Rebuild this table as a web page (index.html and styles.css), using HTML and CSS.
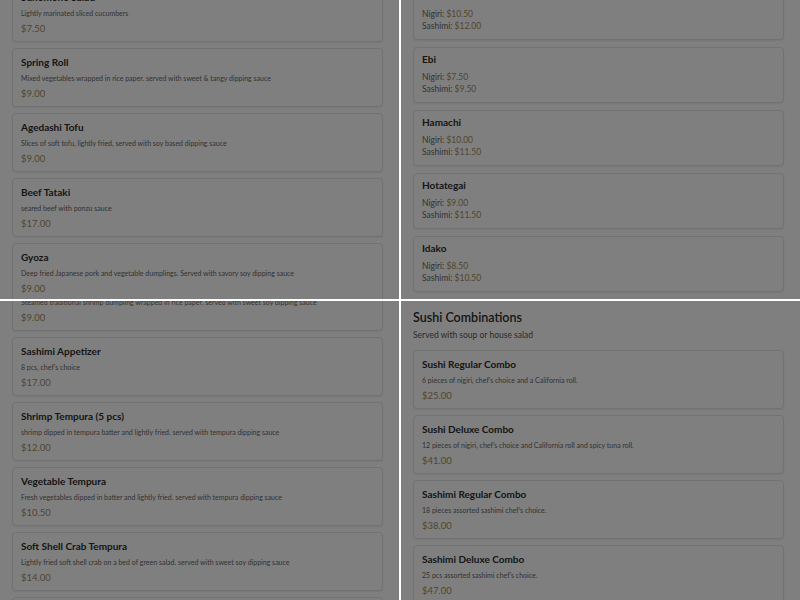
FILE: index.html
```html
<!DOCTYPE html>
<html>
<head>
<meta charset="utf-8">
<link rel="stylesheet" href="styles.css">
</head>
<body>
<div class="screens">
  <section class="screen">
    <div class="page page-a1">
      <div class="card"><h3 class="title">Sunomono Salad</h3><p class="desc">Lightly marinated sliced cucumbers</p><p class="price">$7.50</p></div>
      <div class="card"><h3 class="title">Spring Roll</h3><p class="desc">Mixed vegetables wrapped in rice paper. served with sweet &amp; tangy dipping sauce</p><p class="price">$9.00</p></div>
      <div class="card"><h3 class="title">Agedashi Tofu</h3><p class="desc">Slices of soft tofu, lightly fried, served with soy based dipping sauce</p><p class="price">$9.00</p></div>
      <div class="card"><h3 class="title">Beef Tataki</h3><p class="desc">seared beef with ponzu sauce</p><p class="price">$17.00</p></div>
      <div class="card"><h3 class="title">Gyoza</h3><p class="desc">Deep fried Japanese pork and vegetable dumplings. Served with savory soy dipping sauce</p><p class="price">$9.00</p></div>
    </div>
  </section>
  <section class="screen">
    <div class="page page-b1">
      <div class="card card-sushi"><h3 class="title">Sake</h3><p class="line">Nigiri: <span class="amt">$10.50</span></p><p class="line">Sashimi: <span class="amt">$12.00</span></p></div>
      <div class="card card-sushi"><h3 class="title">Ebi</h3><p class="line">Nigiri: <span class="amt">$7.50</span></p><p class="line">Sashimi: <span class="amt">$9.50</span></p></div>
      <div class="card card-sushi"><h3 class="title">Hamachi</h3><p class="line">Nigiri: <span class="amt">$10.00</span></p><p class="line">Sashimi: <span class="amt">$11.50</span></p></div>
      <div class="card card-sushi"><h3 class="title">Hotategai</h3><p class="line">Nigiri: <span class="amt">$9.00</span></p><p class="line">Sashimi: <span class="amt">$11.50</span></p></div>
      <div class="card card-sushi"><h3 class="title">Idako</h3><p class="line">Nigiri: <span class="amt">$8.50</span></p><p class="line">Sashimi: <span class="amt">$10.50</span></p></div>
    </div>
  </section>
  <section class="screen">
    <div class="page page-a2">
      <div class="card"><h3 class="title">Shumai</h3><p class="desc">Steamed traditional shrimp dumpling wrapped in rice paper. served with sweet soy dipping sauce</p><p class="price">$9.00</p></div>
      <div class="card"><h3 class="title">Sashimi Appetizer</h3><p class="desc">8 pcs, chef's choice</p><p class="price">$17.00</p></div>
      <div class="card"><h3 class="title">Shrimp Tempura (5 pcs)</h3><p class="desc">shrimp dipped in tempura batter and lightly fried. served with tempura dipping sauce</p><p class="price">$12.00</p></div>
      <div class="card"><h3 class="title">Vegetable Tempura</h3><p class="desc">Fresh vegetables dipped in batter and lightly fried. served with tempura dipping sauce</p><p class="price">$10.50</p></div>
      <div class="card"><h3 class="title">Soft Shell Crab Tempura</h3><p class="desc">Lightly fried soft shell crab on a bed of green salad. served with sweet soy dipping sauce</p><p class="price">$14.00</p></div>
      <div class="card"><h3 class="title">Chicken Karaage</h3><p class="desc">Japanese style fried chicken</p><p class="price">$10.00</p></div>
    </div>
  </section>
  <section class="screen">
    <div class="page page-b2">
      <header class="section-head">
        <h2 class="section-title">Sushi Combinations</h2>
        <p class="section-sub">Served with soup or house salad</p>
      </header>
      <div class="card"><h3 class="title">Sushi Regular Combo</h3><p class="desc">6 pieces of nigiri, chef's choice and a California roll.</p><p class="price">$25.00</p></div>
      <div class="card"><h3 class="title">Sushi Deluxe Combo</h3><p class="desc">12 pieces of nigiri, chef's choice and California roll and spicy tuna roll.</p><p class="price">$41.00</p></div>
      <div class="card"><h3 class="title">Sashimi Regular Combo</h3><p class="desc">18 pieces assorted sashimi chef's choice.</p><p class="price">$38.00</p></div>
      <div class="card"><h3 class="title">Sashimi Deluxe Combo</h3><p class="desc">25 pcs assorted sashimi chef's choice.</p><p class="price">$47.00</p></div>
    </div>
  </section>
</div>
</body>
</html>
```
FILE: styles.css
```css
* { box-sizing: border-box; }
html, body { margin: 0; padding: 0; background: #ffffff; }
body { font-family: "Lato", "Open Sans", sans-serif; }

.screens {
  display: grid;
  grid-template-columns: 399px 399px;
  grid-template-rows: 299px 299px;
  gap: 2px;
  width: 800px;
  height: 600px;
  background: #ffffff;
}

.screen {
  position: relative;
  overflow: hidden;
  background: #ffffff;
}
.screen::after {
  content: "";
  position: absolute;
  inset: 0;
  background: rgba(0, 0, 0, 0.5);
}

.page {
  display: flex;
  flex-direction: column;
  gap: 6px;
  padding: 0 16px 0 12px;
}
.page-a1 { margin-top: -17px; }
.page-a2 { margin-top: -29px; }
.page-b1 { margin-top: -16px; gap: 7px; }
.page-b2 { padding-top: 8px; }

.card {
  height: 59px;
  flex: none;
  border: 1px solid #e4e4e4;
  border-radius: 4px;
  background: #ffffff;
  box-shadow: 0 1px 2px rgba(0, 0, 0, 0.08);
  padding: 7px 8px 0 8px;
}
.card-sushi { height: 56px; padding-top: 5px; }

.title {
  margin: 0;
  font-size: 10px;
  line-height: 12px;
  font-weight: 700;
  color: #2c2c2c;
}
.desc {
  margin: 5px 0 0 0;
  font-size: 7px;
  line-height: 10px;
  color: #666666;
}
.price {
  margin: 5px 0 0 0;
  font-size: 9.5px;
  line-height: 12px;
  color: #a48c5c;
}
.line {
  margin: 0;
  font-size: 8.5px;
  line-height: 12px;
  color: #666666;
}
.card-sushi .title { margin-bottom: 6px; }
.amt { color: #a48c5c; }

.section-head { margin-bottom: 3px; }
.section-title {
  margin: 0;
  font-size: 12.5px;
  line-height: 18px;
  font-weight: 600;
  color: #2c2c2c;
}
.section-sub {
  margin: 2px 0 0 0;
  font-size: 8.5px;
  line-height: 12px;
  color: #555555;
}
```
